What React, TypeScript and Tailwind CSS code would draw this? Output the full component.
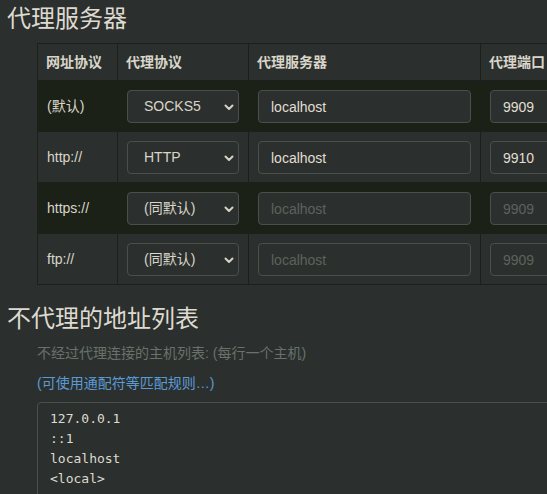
import { ChangeEvent, useState } from 'react';

type Row = {
  scheme: string;
  protocol: string;
  host: string;
  port: string;
  dark: boolean;
};

const rows: Row[] = [
  { scheme: '(默认)', protocol: 'SOCKS5', host: 'localhost', port: '9909', dark: true },
  { scheme: 'http://', protocol: 'HTTP', host: 'localhost', port: '9910', dark: false },
  { scheme: 'https://', protocol: '(同默认)', host: '', port: '', dark: true },
  { scheme: 'ftp://', protocol: '(同默认)', host: '', port: '', dark: false },
];

const protocols = ['(同默认)', 'SOCKS5', 'SOCKS4', 'HTTP', 'HTTPS'];

const Chevron = () => (
  <svg
    className="pointer-events-none absolute right-[5px] top-1/2 -mt-[3px]"
    width="10"
    height="7"
    viewBox="0 0 10 7"
  >
    <polyline
      points="1.5,1.5 5,5 8.5,1.5"
      fill="none"
      stroke="#d6d2c6"
      strokeWidth="2"
      strokeLinecap="round"
      strokeLinejoin="round"
    />
  </svg>
);

const ProxyRow = ({ row }: { row: Row }) => {
  const [protocol, setProtocol] = useState(row.protocol);
  const [host, setHost] = useState(row.host);
  const [port, setPort] = useState(row.port);

  return (
    <tr className={row.dark ? 'bg-[#1c2118]' : 'bg-[#2b302e]'}>
      <td className="border border-[#1b201c] px-[9px] text-[14px] text-[#d9d5c9]">
        {row.scheme}
      </td>
      <td className="border border-[#1b201c] px-[9px] pb-[8px] pt-[9px]">
        <div className="relative">
          <select
            value={protocol}
            onChange={(e: ChangeEvent<HTMLSelectElement>) => setProtocol(e.target.value)}
            className="block h-[33px] w-full appearance-none rounded-[4px] border border-[#4a4f4b] bg-[#2b302e] pl-[16px] text-[14px] text-[#d9d5c9] outline-none"
          >
            {protocols.map((p) => (
              <option key={p} value={p}>
                {p}
              </option>
            ))}
          </select>
          <Chevron />
        </div>
      </td>
      <td className="border border-[#1b201c] px-[9px] pb-[8px] pt-[9px]">
        <input
          value={host}
          placeholder="localhost"
          onChange={(e) => setHost(e.target.value)}
          className="block h-[33px] w-full rounded-[4px] border border-[#4a4f4b] bg-[#2b302e] px-[12px] text-[14px] text-[#e2ded2] outline-none placeholder:text-[#5c625d]"
        />
      </td>
      <td className="border border-[#1b201c] px-[9px] pb-[8px] pt-[9px]">
        <input
          value={port}
          placeholder="9909"
          onChange={(e) => setPort(e.target.value)}
          className="block h-[33px] w-full rounded-[4px] border border-[#4a4f4b] bg-[#2b302e] px-[12px] text-[14px] text-[#e2ded2] outline-none placeholder:text-[#5c625d]"
        />
      </td>
    </tr>
  );
};

const App = () => {
  const [bypass, setBypass] = useState('127.0.0.1\n::1\nlocalhost\n<local>');

  return (
    <div className="h-[494px] w-[547px] overflow-hidden bg-[#2b302e] font-['Liberation_Sans','Noto_Sans_CJK_SC',sans-serif] text-[#dedad0]">
      <h1 className="ml-[7px] mt-[3px] text-[24px] leading-[32px]">代理服务器</h1>

      <table className="ml-[37px] mt-[8px] w-[600px] table-fixed border-collapse">
        <colgroup>
          <col className="w-[80px]" />
          <col className="w-[131px]" />
          <col className="w-[232px]" />
          <col className="w-[157px]" />
        </colgroup>
        <thead>
          <tr className="bg-[#2b302e] text-left text-[14px] font-bold text-[#d9d5c9]">
            <th className="h-[37px] border border-[#1b201c] pl-[8px] pr-[9px]">网址协议</th>
            <th className="border border-[#1b201c] pl-[8px] pr-[9px]">代理协议</th>
            <th className="border border-[#1b201c] pl-[8px] pr-[9px]">代理服务器</th>
            <th className="border border-[#1b201c] pl-[8px] pr-[9px]">代理端口</th>
          </tr>
        </thead>
        <tbody>
          {rows.map((row) => (
            <ProxyRow key={row.scheme} row={row} />
          ))}
        </tbody>
      </table>

      <h2 className="ml-[7px] mt-[18px] text-[24px] leading-[32px]">不代理的地址列表</h2>
      <p className="ml-[37px] mt-[8px] text-[14px] leading-[20px] text-[#6a716b]">
        不经过代理连接的主机列表: (每行一个主机)
      </p>
      <a href="#" className="ml-[37px] mt-[10px] block text-[14px] leading-[20px] text-[#5b9bd5]">
        (可使用通配符等匹配规则…)
      </a>
      <textarea
        value={bypass}
        onChange={(e) => setBypass(e.target.value)}
        spellCheck={false}
        className="ml-[37px] mt-[9px] block h-[140px] w-[560px] resize-none rounded-[4px] border border-[#4a4f4b] bg-[#2b302e] pl-[12px] pt-[6px] font-['DejaVu_Sans_Mono',monospace] text-[13px] leading-[20px] text-[#dedad0] outline-none"
      />
    </div>
  );
};

export default App;
